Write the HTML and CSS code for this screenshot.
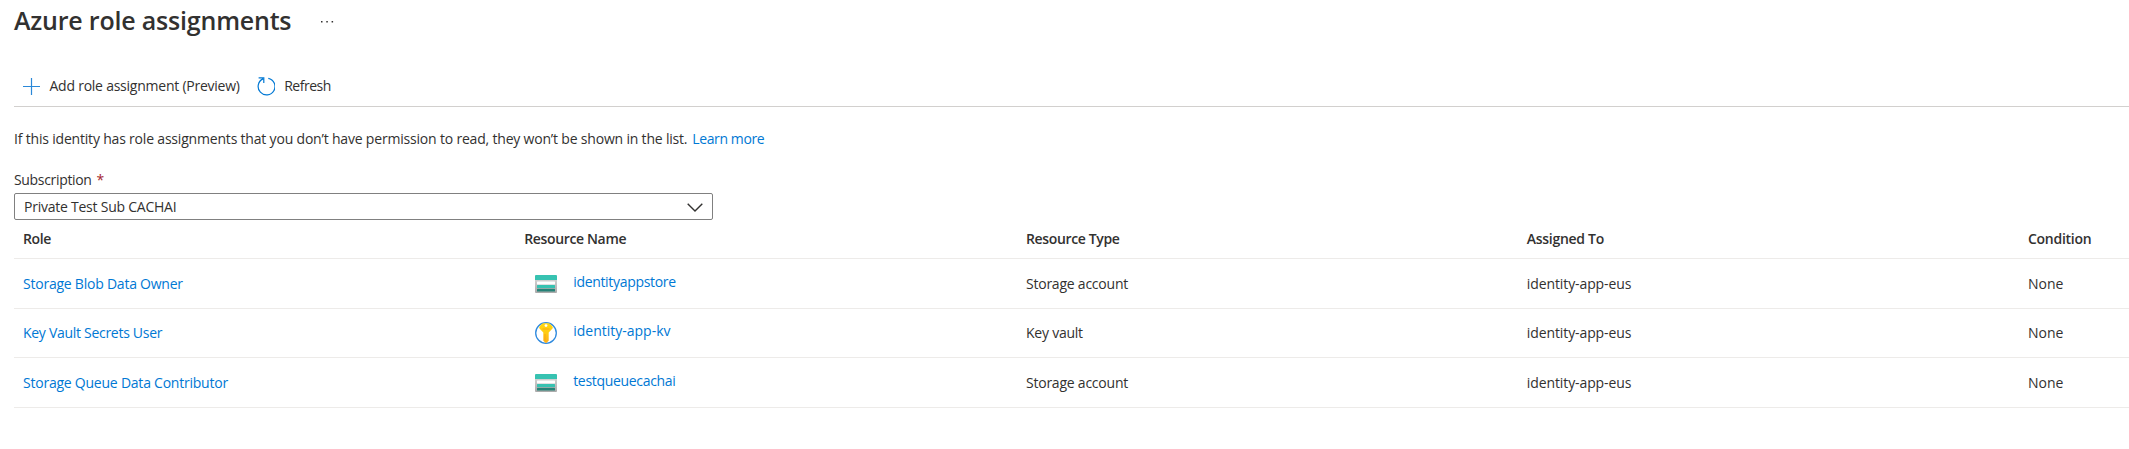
FILE: index.html
```html
<!DOCTYPE html>
<html lang="en">
<head>
<meta charset="utf-8">
<title>Azure role assignments</title>
<link rel="stylesheet" href="styles.css">
</head>
<body>
<svg class="defs" width="0" height="0" aria-hidden="true">
  <defs>
    <linearGradient id="steel" x1="0" y1="1" x2="0" y2="0"><stop offset="0" stop-color="#aaaaaa"/><stop offset="1" stop-color="#d4d4d4"/></linearGradient>
    <linearGradient id="gold" x1="0" y1="0" x2="0" y2="1"><stop offset="0" stop-color="#ffd70f"/><stop offset=".5" stop-color="#ffcb12"/><stop offset="1" stop-color="#feac19"/></linearGradient>
    <symbol id="storage" viewBox="0 0 22 18">
      <path d="M0 4h22v13a1 1 0 0 1-1 1H1a1 1 0 0 1-1-1z" fill="url(#steel)"/>
      <path d="M1 0h20a1 1 0 0 1 1 1v4H0V1a1 1 0 0 1 1-1z" fill="#37c2b1"/>
      <rect x="2" y="6.500" width="18" height="3" rx=".5" fill="#fff"/>
      <rect x="2" y="10" width="18" height="3" rx=".5" fill="#37c2b1"/>
      <rect x="2" y="13.700" width="18" height="2.800" rx=".5" fill="#258277"/>
    </symbol>
    <symbol id="vault" viewBox="0 0 22 22">
      <circle cx="11" cy="11" r="10.300" fill="#fff" stroke="#2f8ade" stroke-width="1.300"/>
      <path d="M8.300 1.200h5.400c.5 0 .9.200 1.200.5l2.400 2.500c.6.600.6 1.900 0 2.500l-3.600 3.800v8.200L11 21.300l-2.700-2.600v-8.200L4.700 6.700c-.6-.6-.6-1.900 0-2.500l2.400-2.500c.3-.3.700-.5 1.200-.5z" fill="url(#gold)"/>
      <circle cx="11" cy="3.600" r="1.400" fill="#fff"/>
      <path d="M7.500 7h7M10 12v6.500" stroke="#f8a514" stroke-width=".9" fill="none"/>
    </symbol>
  </defs>
</svg>
<main class="blade">
  <header class="title-bar">
    <h1 class="title">Azure role assignments</h1>
    <svg class="more" width="13" height="2" viewBox="0 0 13 2"><path d="M0 0h1.500v1.500H0zM5.300 0h1.500v1.500H5.300zM10.600 0h1.500v1.500h-1.500z" fill="#323130"/></svg>
  </header>
  <nav class="toolbar">
    <a class="command"><svg class="add-icon" width="17" height="17" viewBox="0 0 17 17"><path d="M8.500 0v17M0 8.500h17" stroke="#2b88d8" stroke-width="1.200"/></svg><span class="add-label">Add role assignment (Preview)</span></a>
    <a class="command"><svg class="refresh-icon" width="18" height="19" viewBox="0 0 18 19"><path d="M11.300 1.300A8.400 8.400 0 1 1 6 1.900M1.600.9h5.200v5.200" fill="none" stroke="#0078d4" stroke-width="1.200"/></svg><span class="refresh-label">Refresh</span></a>
  </nav>
  <p class="info"><span class="info-text">If this identity has role assignments that you don’t have permission to read, they won’t be shown in the list.</span><a class="link learn">Learn more</a></p>
  <label class="field-label"><span class="label-text">Subscription</span><span class="required">*</span></label>
  <div class="select"><span class="select-text">Private Test Sub CACHAI</span><svg width="16" height="9" viewBox="0 0 16 9"><path d="M.7.700 8 8 15.300.7" fill="none" stroke="#323130" stroke-width="1.400"/></svg></div>
  <section class="table">
    <div class="row head"><span class="h-role">Role</span><span class="h-name">Resource Name</span><span class="h-type">Resource Type</span><span class="h-to">Assigned To</span><span class="h-cond">Condition</span></div>
    <div class="row"><a class="link r1">Storage Blob Data Owner</a><span class="resource"><svg width="22" height="18"><use href="#storage"/></svg><a class="link n1">identityappstore</a></span><span class="t1">Storage account</span><span class="to">identity-app-eus</span><span class="none">None</span></div>
    <div class="row short"><a class="link r2">Key Vault Secrets User</a><span class="resource"><svg width="22" height="22"><use href="#vault"/></svg><a class="link n2">identity-app-kv</a></span><span class="t2">Key vault</span><span class="to">identity-app-eus</span><span class="none">None</span></div>
    <div class="row"><a class="link r3">Storage Queue Data Contributor</a><span class="resource"><svg width="22" height="18"><use href="#storage"/></svg><a class="link n3">testqueuecachai</a></span><span class="t1">Storage account</span><span class="to">identity-app-eus</span><span class="none">None</span></div>
  </section>
</main>
</body>
</html>
```
FILE: styles.css
```css
* { box-sizing: border-box; }
body { margin: 0; background: #fff; color: #323130; font: 14px/20px "Open Sans", "Noto Sans", sans-serif; overflow: hidden; }
.defs { display: block; }
.blade { padding-left: 14px; height: 449px; white-space: nowrap; }
.link { color: #0078d4; }
.title-bar { display: flex; align-items: center; height: 44px; gap: 30px; }
.title { margin: 0 0 3px; font-size: 25px; line-height: 41px; font-weight: 600; letter-spacing: -.2px; }
.toolbar { display: flex; align-items: center; height: 63px; padding: 22px 0 0 9px; gap: 17px; border-bottom: 1px solid #d2d0ce; }
.command { display: flex; align-items: center; gap: 9.500px; }
.add-label { letter-spacing: -.24px; }
.refresh-label { letter-spacing: -.5px; }
.info { display: flex; gap: 5px; margin: 0; padding-top: 22px; height: 63px; }
.info-text { letter-spacing: -.19px; }
.learn { letter-spacing: -.4px; }
.field-label { display: flex; height: 23px; gap: 5px; }
.label-text { letter-spacing: -.33px; }
.required { color: #a4262c; }
.select { display: flex; align-items: center; justify-content: space-between; width: 699px; height: 27px; padding: 1px 9px 0; border: 1px solid #808080; border-radius: 2px; }
.select-text { letter-spacing: -.24px; }
.row { display: grid; grid-template-columns: 501.200px 501.800px 500.800px 501.200px auto; align-items: center; height: 50px; padding: 1px 0 0 9px; border-bottom: 1px solid #edebe9; }
.short { height: 49px; padding-top: 0; }
.head { height: 39px; padding-top: 0; font-weight: 600; }
.h-role { letter-spacing: -.4px; }
.h-name, .h-type { letter-spacing: -.35px; }
.h-to, .h-cond { letter-spacing: -.28px; }
.r1, .r3, .t1, .t2 { letter-spacing: -.23px; }
.r2 { letter-spacing: -.29px; }
.n1, .n3 { letter-spacing: -.32px; }
.to { letter-spacing: -.1px; }
.resource { display: flex; align-items: center; gap: 16px; padding-left: 11px; }
.resource svg { margin-bottom: 1px; }
.resource .link { margin-bottom: 4px; }
```
